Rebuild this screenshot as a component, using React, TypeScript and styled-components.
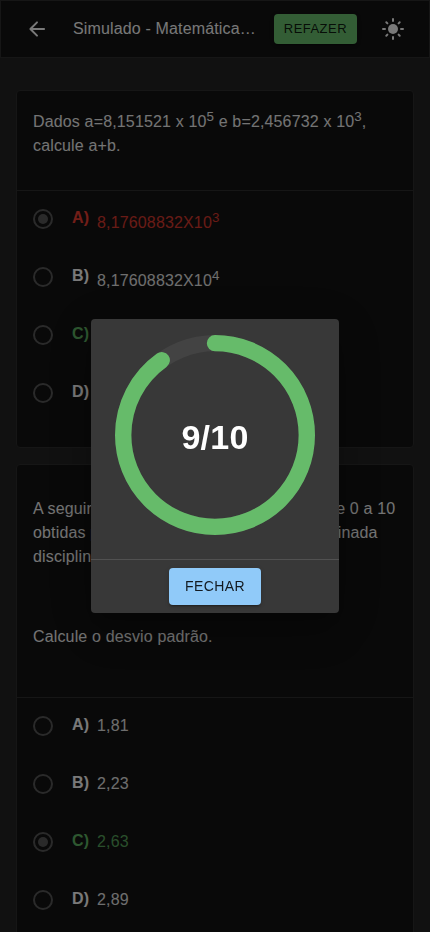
import React from "react";
import styled, { createGlobalStyle } from "styled-components";

const GlobalStyle = createGlobalStyle`
  *, *::before, *::after { box-sizing: border-box; }
  html, body { margin: 0; height: 100%; overflow: hidden; background: #222222; }
  body {
    color: #ffffff;
    font: 400 16px/24px "Liberation Sans", Arial, sans-serif;
    letter-spacing: 0.15008px;
  }
`;

type Tone = "plain" | "right" | "wrong";
const tones: Record<Tone, string> = { plain: "#f2f2f2", right: "#5cae60", wrong: "#e53c30" };

const Screen = styled.div`
  height: 932px;
  overflow: hidden;
`;

const AppBar = styled.header`
  display: flex;
  align-items: center;
  height: 58px;
  padding: 0 16px;
  border: 1px solid #2c2c2c;
  background: #121212;
`;

const IconButton = styled.button`
  display: flex;
  flex: none;
  padding: 8px;
  border: 0;
  background: none;
  color: #f2f2f2;
`;

const Title = styled.h1`
  flex: 1;
  min-width: 0;
  margin: 0 16px;
  overflow: hidden;
  color: #f0f0f0;
  font-size: 16px;
  font-weight: 400;
  line-height: 24px;
  white-space: nowrap;
  text-overflow: ellipsis;
`;

const Button = styled.button<{ $kind: "success" | "primary" }>`
  flex: none;
  border: 0;
  border-radius: 4px;
  color: rgba(0, 0, 0, 0.87);
  font-family: inherit;
  font-weight: 400;
  line-height: 1.75;
  text-transform: uppercase;
  box-shadow: 0 3px 1px -2px rgba(0, 0, 0, 0.2), 0 2px 2px rgba(0, 0, 0, 0.14),
    0 1px 5px rgba(0, 0, 0, 0.12);
  ${({ $kind }) =>
    $kind === "success"
      ? `margin-right: 16px; padding: 4px 10px; background: #66bb6a; font-size: 13px; letter-spacing: 0.46px;`
      : `padding: 6px 16px; background: #90caf9; font-size: 14px; letter-spacing: 0.4px;`}
`;

const Questions = styled.main`
  display: flex;
  flex-direction: column;
  gap: 16px;
  padding: 32px 16px 0;
`;

const Card = styled.section`
  border: 1px solid #2c2c2c;
  border-radius: 4px;
  background: #121212;
`;

const Statement = styled.div<{ $height: number; $top: number }>`
  height: ${({ $height }) => $height}px;
  padding: ${({ $top }) => $top}px 16px 0;
  border-bottom: 1px solid #2c2c2c;
  color: #e8e8e8;
`;

const Paragraph = styled.p`
  margin: 0 0 56px;
`;

const Sup = styled.sup`
  font-size: 13.333px;
  line-height: 0;
  vertical-align: 6px;
`;

const Options = styled.div`
  padding-bottom: 24px;
`;

const OptionRow = styled.label<{ $tone: Tone }>`
  display: flex;
  align-items: center;
  height: 58px;
  padding: 0 14px;
  color: ${({ $tone }) => tones[$tone]};
`;

const RadioIcon = styled.svg`
  flex: none;
  width: 24px;
  height: 24px;
  margin-bottom: 2px;
  color: #555555;
`;

const Letter = styled.strong`
  width: 25px;
  margin: 0 0 4px 17px;
  font-weight: 700;
`;

const Answer = styled.span<{ $raised: boolean }>`
  padding-top: ${({ $raised }) => ($raised ? 5 : 0)}px;
  margin-bottom: ${({ $raised }) => ($raised ? 0 : 2)}px;
  opacity: 0.9;
`;

const Backdrop = styled.div`
  position: fixed;
  inset: 0;
  display: flex;
  align-items: center;
  justify-content: center;
  background: rgba(0, 0, 0, 0.5);
`;

const Dialog = styled.div`
  overflow: hidden;
  border-radius: 4px;
  background: #383838;
  box-shadow: 0 11px 15px -7px rgba(0, 0, 0, 0.2), 0 24px 38px 3px rgba(0, 0, 0, 0.14),
    0 9px 46px 8px rgba(0, 0, 0, 0.12);
`;

const ScoreArea = styled.div`
  display: grid;
  place-items: center;
  padding: 16px 24px 24px;
  border-bottom: 1px solid #515151;
`;

const Ring = styled.svg`
  grid-area: 1 / 1;
  width: 200px;
  height: 200px;
`;

const Score = styled.strong`
  grid-area: 1 / 1;
  padding-top: 4px;
  color: #ffffff;
  font-size: 34px;
  line-height: 42px;
  letter-spacing: 0.25px;
`;

const Actions = styled.div`
  display: flex;
  justify-content: center;
  padding: 8px;
`;

function Radio({ checked }: { checked: boolean }) {
  return (
    <RadioIcon viewBox="0 0 24 24" fill="none">
      <circle cx="12" cy="12" r="9" stroke="currentColor" strokeWidth="2" />
      {checked && <circle cx="12" cy="12" r="5" fill="currentColor" />}
    </RadioIcon>
  );
}

interface OptionData {
  letter: string;
  text: string;
  power?: string;
  tone?: Tone;
  checked?: boolean;
}

const sumOptions: OptionData[] = [
  { letter: "A", text: "8,17608832X10", power: "3", tone: "wrong", checked: true },
  { letter: "B", text: "8,17608832X10", power: "4" },
  { letter: "C", text: "8,17608832X10", power: "5", tone: "right" },
  { letter: "D", text: "8,17608832X10", power: "6" },
];

const deviationOptions: OptionData[] = [
  { letter: "A", text: "1,81" },
  { letter: "B", text: "2,23" },
  { letter: "C", text: "2,63", tone: "right", checked: true },
  { letter: "D", text: "2,89" },
];

const ringLength = 2 * Math.PI * 20.2;

function OptionList({ items }: { items: OptionData[] }) {
  return (
    <Options>
      {items.map(({ letter, text, power, tone = "plain", checked = false }) => (
        <OptionRow key={letter} $tone={tone}>
          <Radio checked={checked} />
          <Letter>{letter})</Letter>
          <Answer $raised={Boolean(power)}>
            {text}
            {power && <Sup>{power}</Sup>}
          </Answer>
        </OptionRow>
      ))}
    </Options>
  );
}

export default function App() {
  return (
    <>
      <GlobalStyle />
      <Screen>
        <AppBar>
          <IconButton aria-label="Voltar">
            <svg width="24" height="24" viewBox="0 0 24 24" fill="currentColor">
              <path d="M19 11H7.83l4.88-4.88c.39-.39.39-1.03 0-1.42a.996.996 0 0 0-1.41 0l-6.59 6.59a.996.996 0 0 0 0 1.41l6.59 6.59a.996.996 0 1 0 1.41-1.41L7.83 13H19c.55 0 1-.45 1-1s-.45-1-1-1z" />
            </svg>
          </IconButton>
          <Title>Simulado - Matemática Básica</Title>
          <Button $kind="success">Refazer</Button>
          <IconButton aria-label="Tema">
            <svg width="24" height="24" viewBox="0 0 24 24">
              <circle cx="12" cy="12" r="5" fill="currentColor" />
              <path
                d="M12 2v2M12 20v2M2 12h2M20 12h2M5.3 5.3l1.1 1.1M17.6 17.6l1.1 1.1M18.7 5.3l-1.1 1.1M6.4 17.6l-1.1 1.1"
                stroke="currentColor"
                strokeWidth="2"
                strokeLinecap="round"
              />
            </svg>
          </IconButton>
        </AppBar>
        <Questions>
          <Card>
            <Statement $height={100} $top={19}>
              Dados a=8,151521 x 10<Sup>5</Sup> e b=2,456732 x 10<Sup>3</Sup>, calcule a+b.
            </Statement>
            <OptionList items={sumOptions} />
          </Card>
          <Card>
            <Statement $height={233} $top={32}>
              <Paragraph>
                A seguir, são apresentadas várias notas de 0 a 10
                <br />
                obtidas por alguns alunos em uma determinada
                <br />
                disciplina:
              </Paragraph>
              <Paragraph>Calcule o desvio padrão.</Paragraph>
            </Statement>
            <OptionList items={deviationOptions} />
          </Card>
        </Questions>
      </Screen>
      <Backdrop>
        <Dialog role="dialog">
          <ScoreArea>
            <Ring viewBox="0 0 44 44" fill="none">
              <circle cx="22" cy="22" r="20.2" stroke="#434343" strokeWidth="3.6" />
              <circle
                cx="22"
                cy="22"
                r="20.2"
                stroke="#66bb6a"
                strokeWidth="3.6"
                strokeLinecap="round"
                strokeDasharray={ringLength}
                strokeDashoffset={ringLength * 0.1}
                transform="rotate(-90 22 22)"
              />
            </Ring>
            <Score>9/10</Score>
          </ScoreArea>
          <Actions>
            <Button $kind="primary">Fechar</Button>
          </Actions>
        </Dialog>
      </Backdrop>
    </>
  );
}
